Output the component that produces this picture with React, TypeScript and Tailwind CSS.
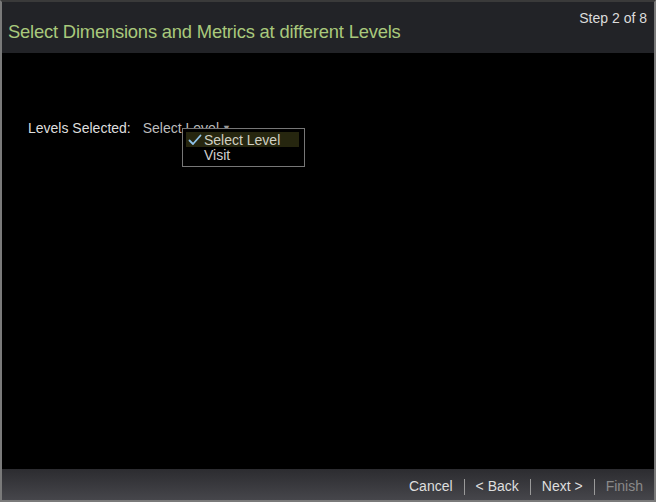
export default function App() {
  return (
    <div
      className="w-[656px] h-[502px] bg-black flex flex-col border-2 border-[#7a7a7a] border-t-[#3a3a3a] overflow-hidden"
      style={{ fontFamily: '"Liberation Sans", Arial, sans-serif' }}
    >
      {/* Header */}
      <header className="h-[51px] bg-[#222327] relative shrink-0">
        <span className="absolute right-[7px] top-[6px] text-[14px] text-[#dcdcdc]">Step 2 of 8</span>
        <h1 className="absolute left-[6px] top-[16px] text-[18.4px] text-[#a9c97c] tracking-[-0.2px]">
          Select Dimensions and Metrics at different Levels
        </h1>
      </header>

      {/* Body */}
      <main className="flex-1 relative">
        <div className="flex items-center pt-[65px] pl-[26px] text-[14px]">
          <span className="text-[#dedede]">Levels Selected:</span>
          <span className="ml-[12px] text-[#bdbdbd] flex items-center">
            Select Level
            <span className="ml-[3px] text-[9px] text-[#9a9a9a]">▼</span>
          </span>
        </div>

        {/* Dropdown menu */}
        <div className="absolute left-[180px] top-[75px] w-[123px] h-[39px] bg-black border border-[#777] pt-[3px] px-[3px] text-[14px] leading-[16px]">
          <div className="flex items-center bg-[#26260f] h-[15px] w-[113px]">
            <svg width="14" height="12" viewBox="0 0 14 12" className="ml-[2px]">
              <path d="M1.5 6.5 L5 10 L12.5 1.5" fill="none" stroke="#8fc3ea" strokeWidth="1.8" strokeLinecap="round" strokeLinejoin="round" />
            </svg>
            <span className="ml-[2px] text-[#d0d0c4]">Select Level</span>
          </div>
          <div className="pl-[18px] text-[#d0d0d0]">Visit</div>
        </div>
      </main>

      {/* Footer */}
      <footer className="h-[31px] shrink-0 bg-gradient-to-b from-[#2c2c30] to-[#46464b] flex items-center justify-end pr-[11px] pt-[4px] text-[14px] text-[#dedede]">
        <span>Cancel</span>
        <span className="mx-[11px] w-px h-[16px] bg-[#9a9a9a]" />
        <span>&lt; Back</span>
        <span className="mx-[11px] w-px h-[16px] bg-[#9a9a9a]" />
        <span>Next &gt;</span>
        <span className="mx-[11px] w-px h-[16px] bg-[#9a9a9a]" />
        <span className="text-[#8a8a8a]">Finish</span>
      </footer>
    </div>
  );
}
